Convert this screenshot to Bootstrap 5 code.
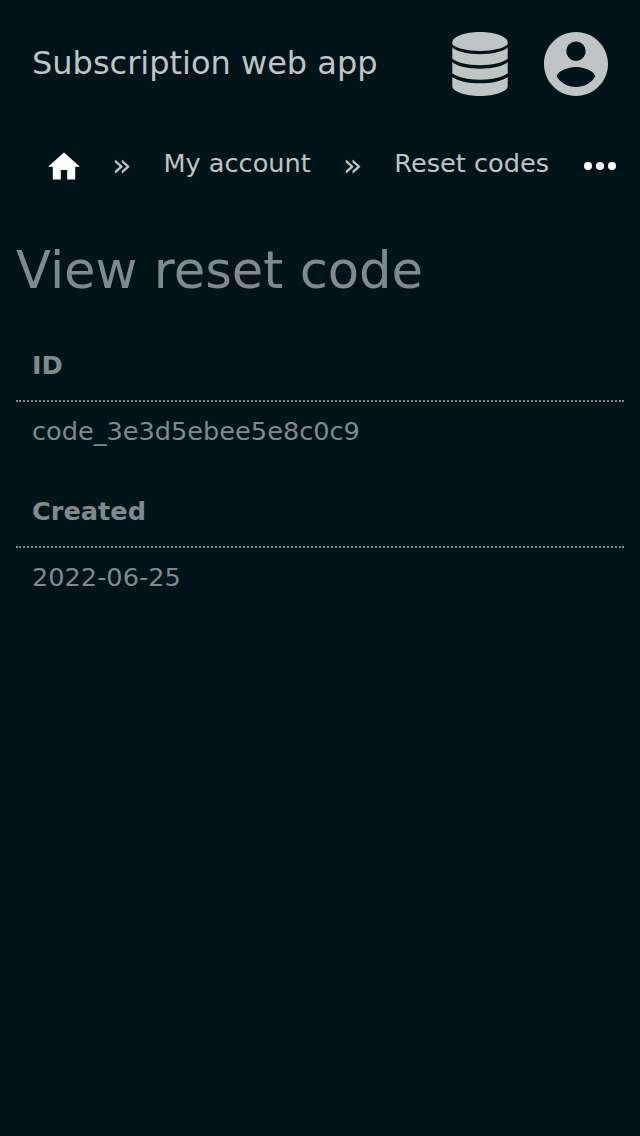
<!DOCTYPE html>
<html lang="en">
<head>
<meta charset="utf-8">
<meta name="viewport" content="width=device-width, initial-scale=1">
<title>View reset code</title>
<link href="https://cdn.jsdelivr.net/npm/bootstrap@5.3.0/dist/css/bootstrap.min.css" rel="stylesheet">
<style>
body { background: #001419; color: #80898c; font-family: "DejaVu Sans", sans-serif; font-size: 25.6px; line-height: 34px; }
.app-header { height: 128px; padding: 0 32px; color: #bfc4c5; }
.app-title { font-size: 32px; line-height: 40px; color: inherit; margin-top: -2px; }
.app-icons { gap: 36px; }
.app-icons a { color: inherit; }
.crumbs { height: 76px; padding: 0 24px 0 48px; color: #bfc4c5; }
.crumbs a { color: inherit; }
.crumb-sep { width: 83.500px; font-size: 32px; text-align: center; margin-top: -2px; }
.crumb-text { margin-top: -6px; }
.page-title { font-size: 51.2px; line-height: 60px; font-weight: 400; margin: 36px 0 0; }
.entry { margin-top: 40px; }
.entry dt { height: 62px; padding: 8px 16px 0; border-bottom: 2px dotted #80898c; font-weight: 700; }
.entry dd { height: 60px; padding: 12px 16px 0; margin: 0; }
.entry + .entry { margin-top: 24px; }
</style>
</head>
<body>
<header class="app-header d-flex align-items-center justify-content-between">
  <a class="app-title text-decoration-none" href="#">Subscription web app</a>
  <nav class="app-icons d-flex">
    <a href="#" class="d-flex" aria-label="Data">
      <svg width="56" height="64" viewBox="0 0 56 64" fill="currentColor">
        <path d="M28 0C43 0 55.700 4.500 55.700 10.500V12.300C52 16.400 41 18.900 28 18.900S4 16.400 .3 12.300V10.500C.3 4.500 13 0 28 0Z"/>
        <path d="M.3 15.800C6 20 16 22.200 28 22.200S50 20 55.700 15.800V26.800C50 31.200 40 33.200 28 33.200S6 31.200 .3 26.800Z"/>
        <path d="M.3 30.300C6 34.600 16 36.700 28 36.700S50 34.600 55.700 30.300V41.300C50 45.600 40 47.700 28 47.700S6 45.600 .3 41.300Z"/>
        <path d="M.3 44.900C6 49.100 16 51.200 28 51.200S50 49.100 55.700 44.900V54C55.700 59.500 43 64 28 64S.3 59.500 .3 54Z"/>
      </svg>
    </a>
    <a href="#" class="d-flex" aria-label="Account">
      <svg width="64" height="64" viewBox="2 2 20 20" fill="currentColor"><path d="M12 2C6.480 2 2 6.480 2 12s4.480 10 10 10 10-4.480 10-10S17.520 2 12 2zm0 3c1.660 0 3 1.340 3 3s-1.340 3-3 3-3-1.340-3-3 1.340-3 3-3zm0 14.200c-2.500 0-4.710-1.280-6-3.220.03-1.990 4-3.080 6-3.080 1.990 0 5.970 1.090 6 3.080-1.290 1.940-3.500 3.220-6 3.220z"/></svg>
    </a>
  </nav>
</header>
<nav class="crumbs d-flex align-items-center text-nowrap" aria-label="breadcrumb">
  <a href="#" class="d-flex text-white" aria-label="Home"><svg width="32" height="28" viewBox="2 2.750 20 17.500" fill="currentColor"><path d="M10 20v-6h4v6h5v-8h3L12 3 2 12h3v8z"/></svg></a>
  <span class="crumb-sep">»</span>
  <a href="#" class="crumb-text text-decoration-none">My account</a>
  <span class="crumb-sep">»</span>
  <a href="#" class="crumb-text text-decoration-none">Reset codes</a>
  <a href="#" class="d-flex ms-auto text-white" aria-label="More"><svg width="32" height="8" viewBox="0 0 32 8" fill="currentColor"><circle cx="4" cy="4" r="4"/><circle cx="16" cy="4" r="4"/><circle cx="28" cy="4" r="4"/></svg></a>
</nav>
<main class="px-3">
  <h1 class="page-title">View reset code</h1>
  <dl class="m-0">
    <div class="entry"><dt>ID</dt><dd>code_3e3d5ebee5e8c0c9</dd></div>
    <div class="entry"><dt>Created</dt><dd>2022-06-25</dd></div>
  </dl>
</main>
<script src="https://cdn.jsdelivr.net/npm/bootstrap@5.3.0/dist/js/bootstrap.bundle.min.js"></script>
</body>
</html>
